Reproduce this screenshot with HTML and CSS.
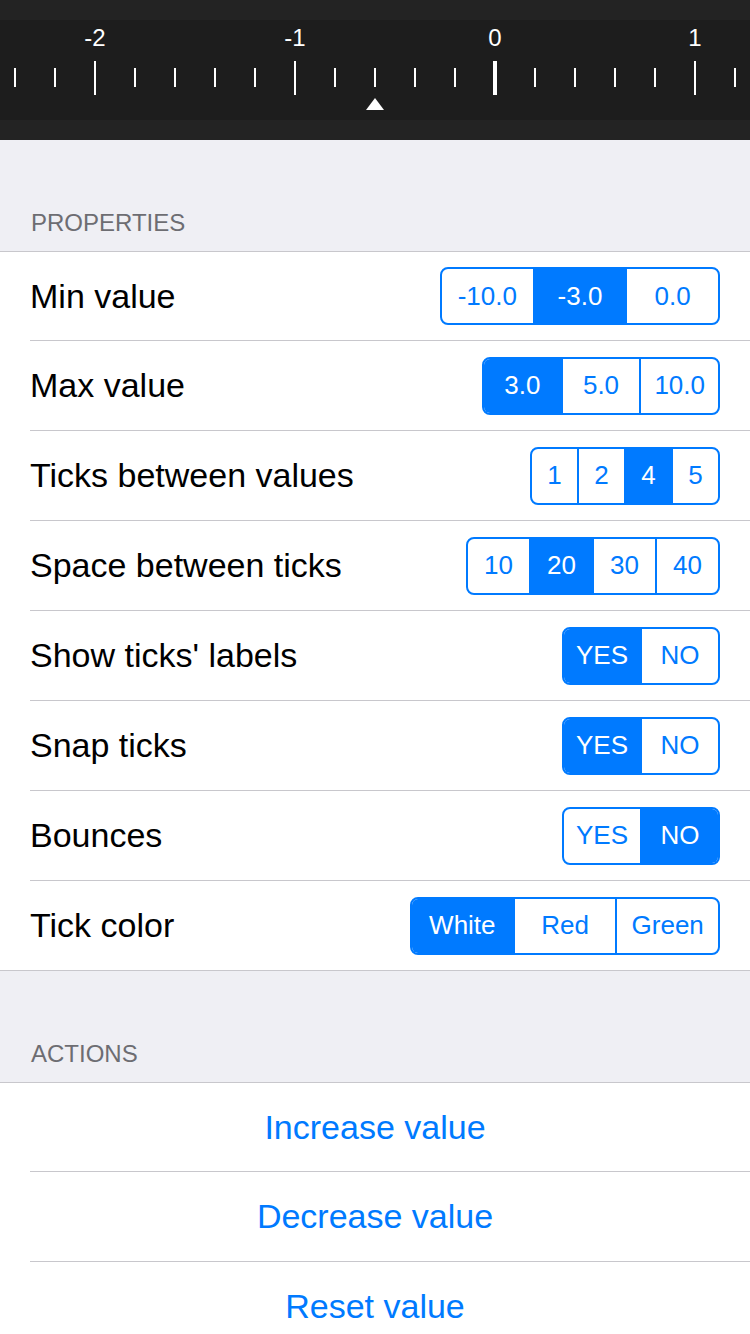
FILE: index.html
```html
<!DOCTYPE html>
<html>
<head>
<meta charset="utf-8">
<link rel="stylesheet" href="styles.css">
</head>
<body>
<div class="ruler">
  <svg class="ruler__svg" width="750" height="140" viewBox="0 0 750 140">
    <rect x="0" y="0" width="750" height="140" fill="#232323"/>
    <rect x="0" y="20" width="750" height="100" fill="#1d1d1d"/>
    <g fill="#ffffff" font-family="Liberation Sans, Arial, sans-serif" font-size="24" text-anchor="middle">
      <text x="95" y="46">-2</text>
      <text x="295" y="46">-1</text>
      <text x="495" y="46">0</text>
      <text x="695" y="46">1</text>
    </g>
    <g fill="#ffffff">
      <rect x="14" y="68" width="2" height="19"/>
      <rect x="54" y="68" width="2" height="19"/>
      <rect x="94" y="61" width="2" height="34"/>
      <rect x="134" y="68" width="2" height="19"/>
      <rect x="174" y="68" width="2" height="19"/>
      <rect x="214" y="68" width="2" height="19"/>
      <rect x="254" y="68" width="2" height="19"/>
      <rect x="294" y="61" width="2" height="34"/>
      <rect x="334" y="68" width="2" height="19"/>
      <rect x="374" y="68" width="2" height="19"/>
      <rect x="414" y="68" width="2" height="19"/>
      <rect x="454" y="68" width="2" height="19"/>
      <rect x="493" y="61" width="4" height="34"/>
      <rect x="534" y="68" width="2" height="19"/>
      <rect x="574" y="68" width="2" height="19"/>
      <rect x="614" y="68" width="2" height="19"/>
      <rect x="654" y="68" width="2" height="19"/>
      <rect x="694" y="61" width="2" height="34"/>
      <rect x="734" y="68" width="2" height="19"/>
      <polygon points="366,110 384,110 375,98"/>
    </g>
  </svg>
</div>

<div class="section-header">PROPERTIES</div>
<ul class="group">
  <li class="row">
    <span class="row__label">Min value</span>
    <div class="seg seg--min">
      <span class="seg__item">-10.0</span>
      <span class="seg__item seg__item--on">-3.0</span>
      <span class="seg__item">0.0</span>
    </div>
  </li>
  <li class="row">
    <span class="row__label">Max value</span>
    <div class="seg seg--max">
      <span class="seg__item seg__item--on">3.0</span>
      <span class="seg__item">5.0</span>
      <span class="seg__item">10.0</span>
    </div>
  </li>
  <li class="row">
    <span class="row__label">Ticks between values</span>
    <div class="seg seg--ticks">
      <span class="seg__item">1</span>
      <span class="seg__item">2</span>
      <span class="seg__item seg__item--on">4</span>
      <span class="seg__item">5</span>
    </div>
  </li>
  <li class="row">
    <span class="row__label">Space between ticks</span>
    <div class="seg seg--space">
      <span class="seg__item">10</span>
      <span class="seg__item seg__item--on">20</span>
      <span class="seg__item">30</span>
      <span class="seg__item">40</span>
    </div>
  </li>
  <li class="row">
    <span class="row__label">Show ticks' labels</span>
    <div class="seg seg--yn">
      <span class="seg__item seg__item--on">YES</span>
      <span class="seg__item">NO</span>
    </div>
  </li>
  <li class="row">
    <span class="row__label">Snap ticks</span>
    <div class="seg seg--yn">
      <span class="seg__item seg__item--on">YES</span>
      <span class="seg__item">NO</span>
    </div>
  </li>
  <li class="row">
    <span class="row__label">Bounces</span>
    <div class="seg seg--yn">
      <span class="seg__item">YES</span>
      <span class="seg__item seg__item--on">NO</span>
    </div>
  </li>
  <li class="row">
    <span class="row__label">Tick color</span>
    <div class="seg seg--color">
      <span class="seg__item seg__item--on">White</span>
      <span class="seg__item">Red</span>
      <span class="seg__item">Green</span>
    </div>
  </li>
</ul>

<div class="section-header">ACTIONS</div>
<ul class="group group--actions">
  <li class="row row--action">Increase value</li>
  <li class="row row--action">Decrease value</li>
  <li class="row row--action">Reset value</li>
</ul>
</body>
</html>
```

FILE: styles.css
```css
html, body {
  margin: 0;
  padding: 0;
}

body {
  width: 750px;
  height: 1334px;
  overflow: hidden;
  background: #efeff4;
  font-family: "Liberation Sans", Arial, sans-serif;
}

.ruler {
  height: 140px;
  background: #232323;
}

.ruler__svg {
  display: block;
}

.section-header {
  height: 111px;
  box-sizing: border-box;
  display: flex;
  align-items: flex-end;
  padding: 0 30px 14px 31px;
  font-size: 24px;
  line-height: 28px;
  color: #6d6d72;
}

.group {
  list-style: none;
  margin: 0;
  padding: 0;
  background: #ffffff;
  border-top: 1px solid #c8c7cc;
  border-bottom: 1px solid #c8c7cc;
}

.group--actions {
  border-bottom: none;
}

.row {
  display: flex;
  align-items: center;
  height: 89px;
  margin-left: 30px;
  padding-right: 30px;
}

.row:first-child {
  height: 88px;
}

.row + .row {
  border-top: 1px solid #c8c7cc;
}

.row__label {
  font-size: 34px;
  color: #000000;
  white-space: nowrap;
}

.row--action {
  justify-content: center;
  font-size: 34px;
  color: #007aff;
}

.seg {
  margin-left: auto;
  display: flex;
  box-sizing: border-box;
  height: 58px;
  border: 2px solid #007aff;
  border-radius: 8px;
  overflow: hidden;
}

.seg--min { width: 280px; }
.seg--max { width: 238px; }
.seg--ticks { width: 190px; }
.seg--space { width: 254px; }
.seg--yn { width: 158px; }
.seg--color { width: 310px; }

.seg__item {
  flex: 1 1 0;
  display: flex;
  align-items: center;
  justify-content: center;
  font-size: 26px;
  color: #007aff;
}

.seg__item + .seg__item {
  border-left: 2px solid #007aff;
}

.seg__item--on {
  background: #007aff;
  color: #ffffff;
}
```
